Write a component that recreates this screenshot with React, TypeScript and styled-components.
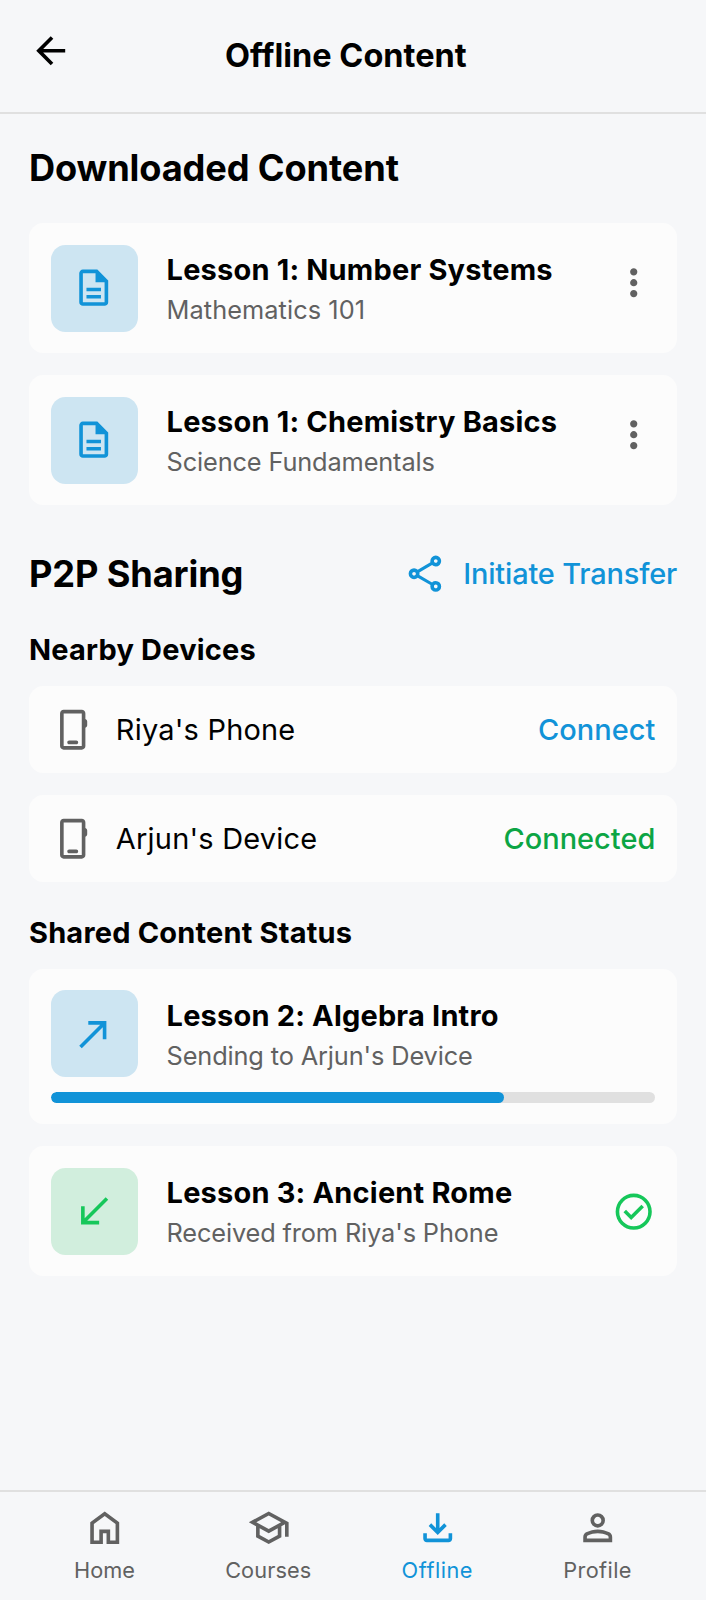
import React from "react";
import styled, { createGlobalStyle } from "styled-components";

const color = {
  background: "#f6f7f9",
  surface: "#fcfcfc",
  border: "#e0e0e0",
  text: "#000000",
  muted: "#616161",
  primary: "#1193d8",
  primarySoft: "#cde5f2",
  success: "#16c75a",
  successSoft: "#d1eedd",
  successText: "#0ca544",
};

const GlobalStyle = createGlobalStyle`
  * { box-sizing: border-box; margin: 0; padding: 0; }
  body {
    background: ${color.background};
    color: ${color.text};
    font-family: Inter, "Liberation Sans", sans-serif;
    font-size: 28.97px;
    line-height: 43.45px;
  }
  button { font: inherit; color: inherit; background: none; border: 0; cursor: pointer; }
  ul { list-style: none; }
`;

const paths = {
  back: "m313-440 224 224-57 56-320-320 320-320 57 56-224 224h487v80H313Z",
  document:
    "M320-240h320v-80H320v80Zm0-160h320v-80H320v80ZM240-80q-33 0-56.5-23.5T160-160v-640q0-33 23.5-56.5T240-880h320l240 240v480q0 33-23.5 56.5T720-80H240Zm280-520v-200H240v640h480v-440H520Z",
  more: "M480-160q-33 0-56.5-23.5T400-240q0-33 23.5-56.5T480-320q33 0 56.5 23.5T560-240q0 33-23.5 56.5T480-160Zm0-240q-33 0-56.5-23.5T400-480q0-33 23.5-56.5T480-560q33 0 56.5 23.5T560-480q0 33-23.5 56.5T480-400Zm0-240q-33 0-56.5-23.5T400-720q0-33 23.5-56.5T480-800q33 0 56.5 23.5T560-720q0 33-23.5 56.5T480-640Z",
  share:
    "M680-80q-50 0-85-35t-35-85q0-6 3-28L282-392q-16 15-37 23.5t-45 8.5q-50 0-85-35t-35-85q0-50 35-85t85-35q24 0 45 8.5t37 23.5l281-164q-2-7-2.5-13.5T560-760q0-50 35-85t85-35q50 0 85 35t35 85q0 50-35 85t-85 35q-24 0-45-8.5T598-672L317-508q2 7 2.5 13.5t.5 14.5q0 8-.5 14.5T317-452l281 164q16-15 37-23.5t45-8.5q50 0 85 35t35 85q0 50-35 85t-85 35Zm0-80q17 0 28.5-11.5T720-200q0-17-11.5-28.5T680-240q-17 0-28.5 11.5T640-200q0 17 11.5 28.5T680-160ZM200-440q17 0 28.5-11.5T240-480q0-17-11.5-28.5T200-520q-17 0-28.5 11.5T160-480q0 17 11.5 28.5T200-440Zm480-280q17 0 28.5-11.5T720-760q0-17-11.5-28.5T680-800q-17 0-28.5 11.5T640-760q0 17 11.5 28.5T680-720Z",
  phone:
    "M280-40q-33 0-56.5-23.5T200-120v-720q0-33 23.5-56.5T280-920h400q33 0 56.5 23.5T760-840v124q18 7 29 22t11 34v80q0 19-11 34t-29 22v404q0 33-23.5 56.5T680-40H280Zm0-80h400v-720H280v720Zm120-40h160q17 0 28.5-11.5T600-200q0-17-11.5-28.5T560-240H400q-17 0-28.5 11.5T360-200q0 17 11.5 28.5T400-160Z",
  sent: "m216-160-56-56 464-464H360v-80h400v400h-80v-264L216-160Z",
  received: "M200-200v-400h80v264l464-464 56 56-464 464h264v80H200Z",
  check:
    "m424-296 282-282-56-56-226 226-114-114-56 56 170 170Zm56 216q-83 0-156-31.5T197-197q-54-54-85.500-127T80-480q0-83 31.500-156T197-763q54-54 127-85.500T480-880q83 0 156 31.500T763-763q54 54 85.500 127T880-480q0 83-31.500 156T763-197q-54 54-127 85.500T480-80Zm0-80q134 0 227-93t93-227q0-134-93-227t-227-93q-134 0-227 93t-93 227q0 134 93 227t227 93Z",
  home: "M240-200h120v-240h240v240h120v-360L480-740 240-560v360Zm-80 80v-480l320-240 320 240v480H520v-240h-80v240H160Z",
  school:
    "M480-120 200-272v-240L40-600l440-240 440 240v320h-80v-276l-80 44v240L480-120Zm0-332 274-148-274-148-274 148 274 148Zm0 241 200-108v-151L480-360 280-470v151l200 108Z",
  download:
    "M480-320 280-520l56-58 104 104v-326h80v326l104-104 56 58-200 200ZM240-160q-33 0-56.5-23.5T160-240v-120h80v120h480v-120h80v120q0 33-23.5 56.5T720-160H240Z",
  person:
    "M480-480q-66 0-113-47t-47-113q0-66 47-113t113-47q66 0 113 47t47 113q0 66-47 113t-113 47ZM160-160v-112q0-34 17.5-62.5T224-378q62-31 126-46.5T480-440q66 0 130 15.5T736-378q29 15 46.5 43.5T800-272v112H160Zm80-80h480v-32q0-11-5.5-20T700-306q-54-27-109-40.5T480-360q-56 0-111 13.5T260-306q-9 5-14.5 14t-5.5 20v32Zm240-320q33 0 56.5-23.5T560-640q0-33-23.5-56.5T480-720q-33 0-56.5 23.5T400-640q0 33 23.5 56.5T480-560Z",
};

type IconName = keyof typeof paths;

const Svg = styled.svg`
  display: block;
  flex: none;
  width: 43.45px;
  height: 43.45px;
  fill: currentColor;
`;

const Icon = ({ name }: { name: IconName }) => (
  <Svg viewBox="0 -960 960 960" aria-hidden="true">
    <path d={paths[name]} />
  </Svg>
);

const Screen = styled.div`
  display: flex;
  flex-direction: column;
  min-height: 100vh;
`;

const Header = styled.header`
  display: flex;
  align-items: flex-start;
  padding: 28.97px 86.9px 0 28.97px;
  height: 114px;
  border-bottom: 2px solid ${color.border};
`;

const IconButton = styled.button<{ $muted?: boolean }>`
  display: flex;
  align-items: flex-start;
  height: 54.3px;
  color: ${(p) => (p.$muted ? color.muted : color.text)};
`;

const PageTitle = styled.h1`
  flex: 1;
  text-align: center;
  font-size: 32.5px;
  line-height: 53.5px;
  font-weight: 700;
`;

const Main = styled.main`
  flex: 1;
  display: flex;
  flex-direction: column;
  gap: 43.45px;
  padding: 29.3px 28.97px 28.97px;
`;

const Section = styled.section`
  display: flex;
  flex-direction: column;
  gap: 28.97px;
`;

const Group = styled.div`
  display: flex;
  flex-direction: column;
  gap: 14.48px;
`;

const SectionHeader = styled.div`
  display: flex;
  align-items: center;
  justify-content: space-between;
`;

const SectionTitle = styled.h2`
  font-size: 36.21px;
  line-height: 50.69px;
  font-weight: 700;
  letter-spacing: -0.13px;
`;

const GroupTitle = styled.h3`
  font-size: 28.97px;
  line-height: 43.45px;
  font-weight: 700;
  letter-spacing: 0.2px;
`;

const TransferButton = styled.button`
  display: flex;
  align-items: center;
  gap: 14.48px;
  color: ${color.primary};
  font-weight: 500;
  letter-spacing: -0.18px;
`;

const List = styled.ul`
  display: flex;
  flex-direction: column;
  gap: 21.72px;
`;

const Card = styled.li`
  display: flex;
  flex-direction: column;
  gap: 14.48px;
  padding: 21.72px;
  border-radius: 14.48px;
  background: ${color.surface};
`;

const CardRow = styled.div`
  display: flex;
  align-items: center;
  gap: 28.97px;
`;

const Tile = styled.div<{ $success?: boolean }>`
  display: flex;
  align-items: center;
  justify-content: center;
  flex: none;
  width: 86.9px;
  height: 86.9px;
  border-radius: 14.48px;
  color: ${(p) => (p.$success ? color.success : color.primary)};
  background: ${(p) => (p.$success ? color.successSoft : color.primarySoft)};
`;

const Details = styled.div`
  flex: 1;
  min-width: 0;
`;

const LessonTitle = styled.p`
  font-weight: 700;
  letter-spacing: 0.2px;
`;

const LessonNote = styled.p<{ $tracking?: number }>`
  font-size: 25.34px;
  line-height: 36.21px;
  letter-spacing: ${(p) => p.$tracking ?? -0.13}px;
  color: ${color.muted};
`;

const DoneMark = styled.span`
  color: ${color.success};
`;

const ProgressTrack = styled.div`
  height: 10.86px;
  border-radius: 5.43px;
  background: ${color.border};
  overflow: hidden;
`;

const ProgressFill = styled.div`
  height: 100%;
  border-radius: 5.43px;
  background: ${color.primary};
`;

const DeviceCard = styled.li`
  display: flex;
  align-items: center;
  gap: 21.72px;
  padding: 21.72px;
  border-radius: 14.48px;
  background: ${color.surface};
  color: ${color.muted};
`;

const DeviceName = styled.span`
  flex: 1;
  letter-spacing: 0.2px;
  color: ${color.text};
`;

const DeviceAction = styled.button<{ $connected?: boolean }>`
  font-weight: 500;
  color: ${(p) => (p.$connected ? color.successText : color.primary)};
`;

const NavBar = styled.nav`
  display: flex;
  justify-content: space-around;
  padding: 14.48px 28.97px 15px;
  border-top: 2px solid ${color.border};
`;

const NavItem = styled.a<{ $active?: boolean; $tracking?: number }>`
  display: flex;
  flex-direction: column;
  align-items: center;
  gap: 6.2px;
  font-size: 21.72px;
  line-height: 28.97px;
  letter-spacing: ${(p) => p.$tracking ?? 0}px;
  color: ${(p) => (p.$active ? color.primary : color.muted)};
`;

const lessons = [
  { title: "Lesson 1: Number Systems", note: "Mathematics 101", tracking: 0.07 },
  { title: "Lesson 1: Chemistry Basics", note: "Science Fundamentals" },
];

const devices = [
  { name: "Riya's Phone", connected: false },
  { name: "Arjun's Device", connected: true },
];

const transfers = [
  { title: "Lesson 2: Algebra Intro", note: "Sending to Arjun's Device", progress: 75 },
  { title: "Lesson 3: Ancient Rome", note: "Received from Riya's Phone" },
];

const navItems: { label: string; icon: IconName; active?: boolean; tracking?: number }[] = [
  { label: "Home", icon: "home" },
  { label: "Courses", icon: "school", tracking: 0.1 },
  { label: "Offline", icon: "download", active: true, tracking: 0.5 },
  { label: "Profile", icon: "person", tracking: 0.4 },
];

export default function App() {
  return (
    <>
      <GlobalStyle />
      <Screen>
        <Header>
          <IconButton aria-label="Back">
            <Icon name="back" />
          </IconButton>
          <PageTitle>Offline Content</PageTitle>
        </Header>
        <Main>
          <Section>
            <SectionTitle>Downloaded Content</SectionTitle>
            <List>
              {lessons.map((lesson) => (
                <Card key={lesson.title}>
                  <CardRow>
                    <Tile>
                      <Icon name="document" />
                    </Tile>
                    <Details>
                      <LessonTitle>{lesson.title}</LessonTitle>
                      <LessonNote $tracking={lesson.tracking}>{lesson.note}</LessonNote>
                    </Details>
                    <IconButton $muted aria-label="More options">
                      <Icon name="more" />
                    </IconButton>
                  </CardRow>
                </Card>
              ))}
            </List>
          </Section>
          <Section>
            <SectionHeader>
              <SectionTitle>P2P Sharing</SectionTitle>
              <TransferButton>
                <Icon name="share" />
                Initiate Transfer
              </TransferButton>
            </SectionHeader>
            <Group>
              <GroupTitle>Nearby Devices</GroupTitle>
              <List>
                {devices.map((device) => (
                  <DeviceCard key={device.name}>
                    <Icon name="phone" />
                    <DeviceName>{device.name}</DeviceName>
                    <DeviceAction $connected={device.connected}>
                      {device.connected ? "Connected" : "Connect"}
                    </DeviceAction>
                  </DeviceCard>
                ))}
              </List>
            </Group>
            <Group>
              <GroupTitle>Shared Content Status</GroupTitle>
              <List>
                {transfers.map((transfer) => {
                  const received = transfer.progress === undefined;
                  return (
                    <Card key={transfer.title}>
                      <CardRow>
                        <Tile $success={received}>
                          <Icon name={received ? "received" : "sent"} />
                        </Tile>
                        <Details>
                          <LessonTitle>{transfer.title}</LessonTitle>
                          <LessonNote>{transfer.note}</LessonNote>
                        </Details>
                        {received && (
                          <DoneMark>
                            <Icon name="check" />
                          </DoneMark>
                        )}
                      </CardRow>
                      {!received && (
                        <ProgressTrack>
                          <ProgressFill style={{ width: `${transfer.progress}%` }} />
                        </ProgressTrack>
                      )}
                    </Card>
                  );
                })}
              </List>
            </Group>
          </Section>
        </Main>
        <NavBar>
          {navItems.map((item) => (
            <NavItem key={item.label} $active={item.active} $tracking={item.tracking}>
              <Icon name={item.icon} />
              {item.label}
            </NavItem>
          ))}
        </NavBar>
      </Screen>
    </>
  );
}
